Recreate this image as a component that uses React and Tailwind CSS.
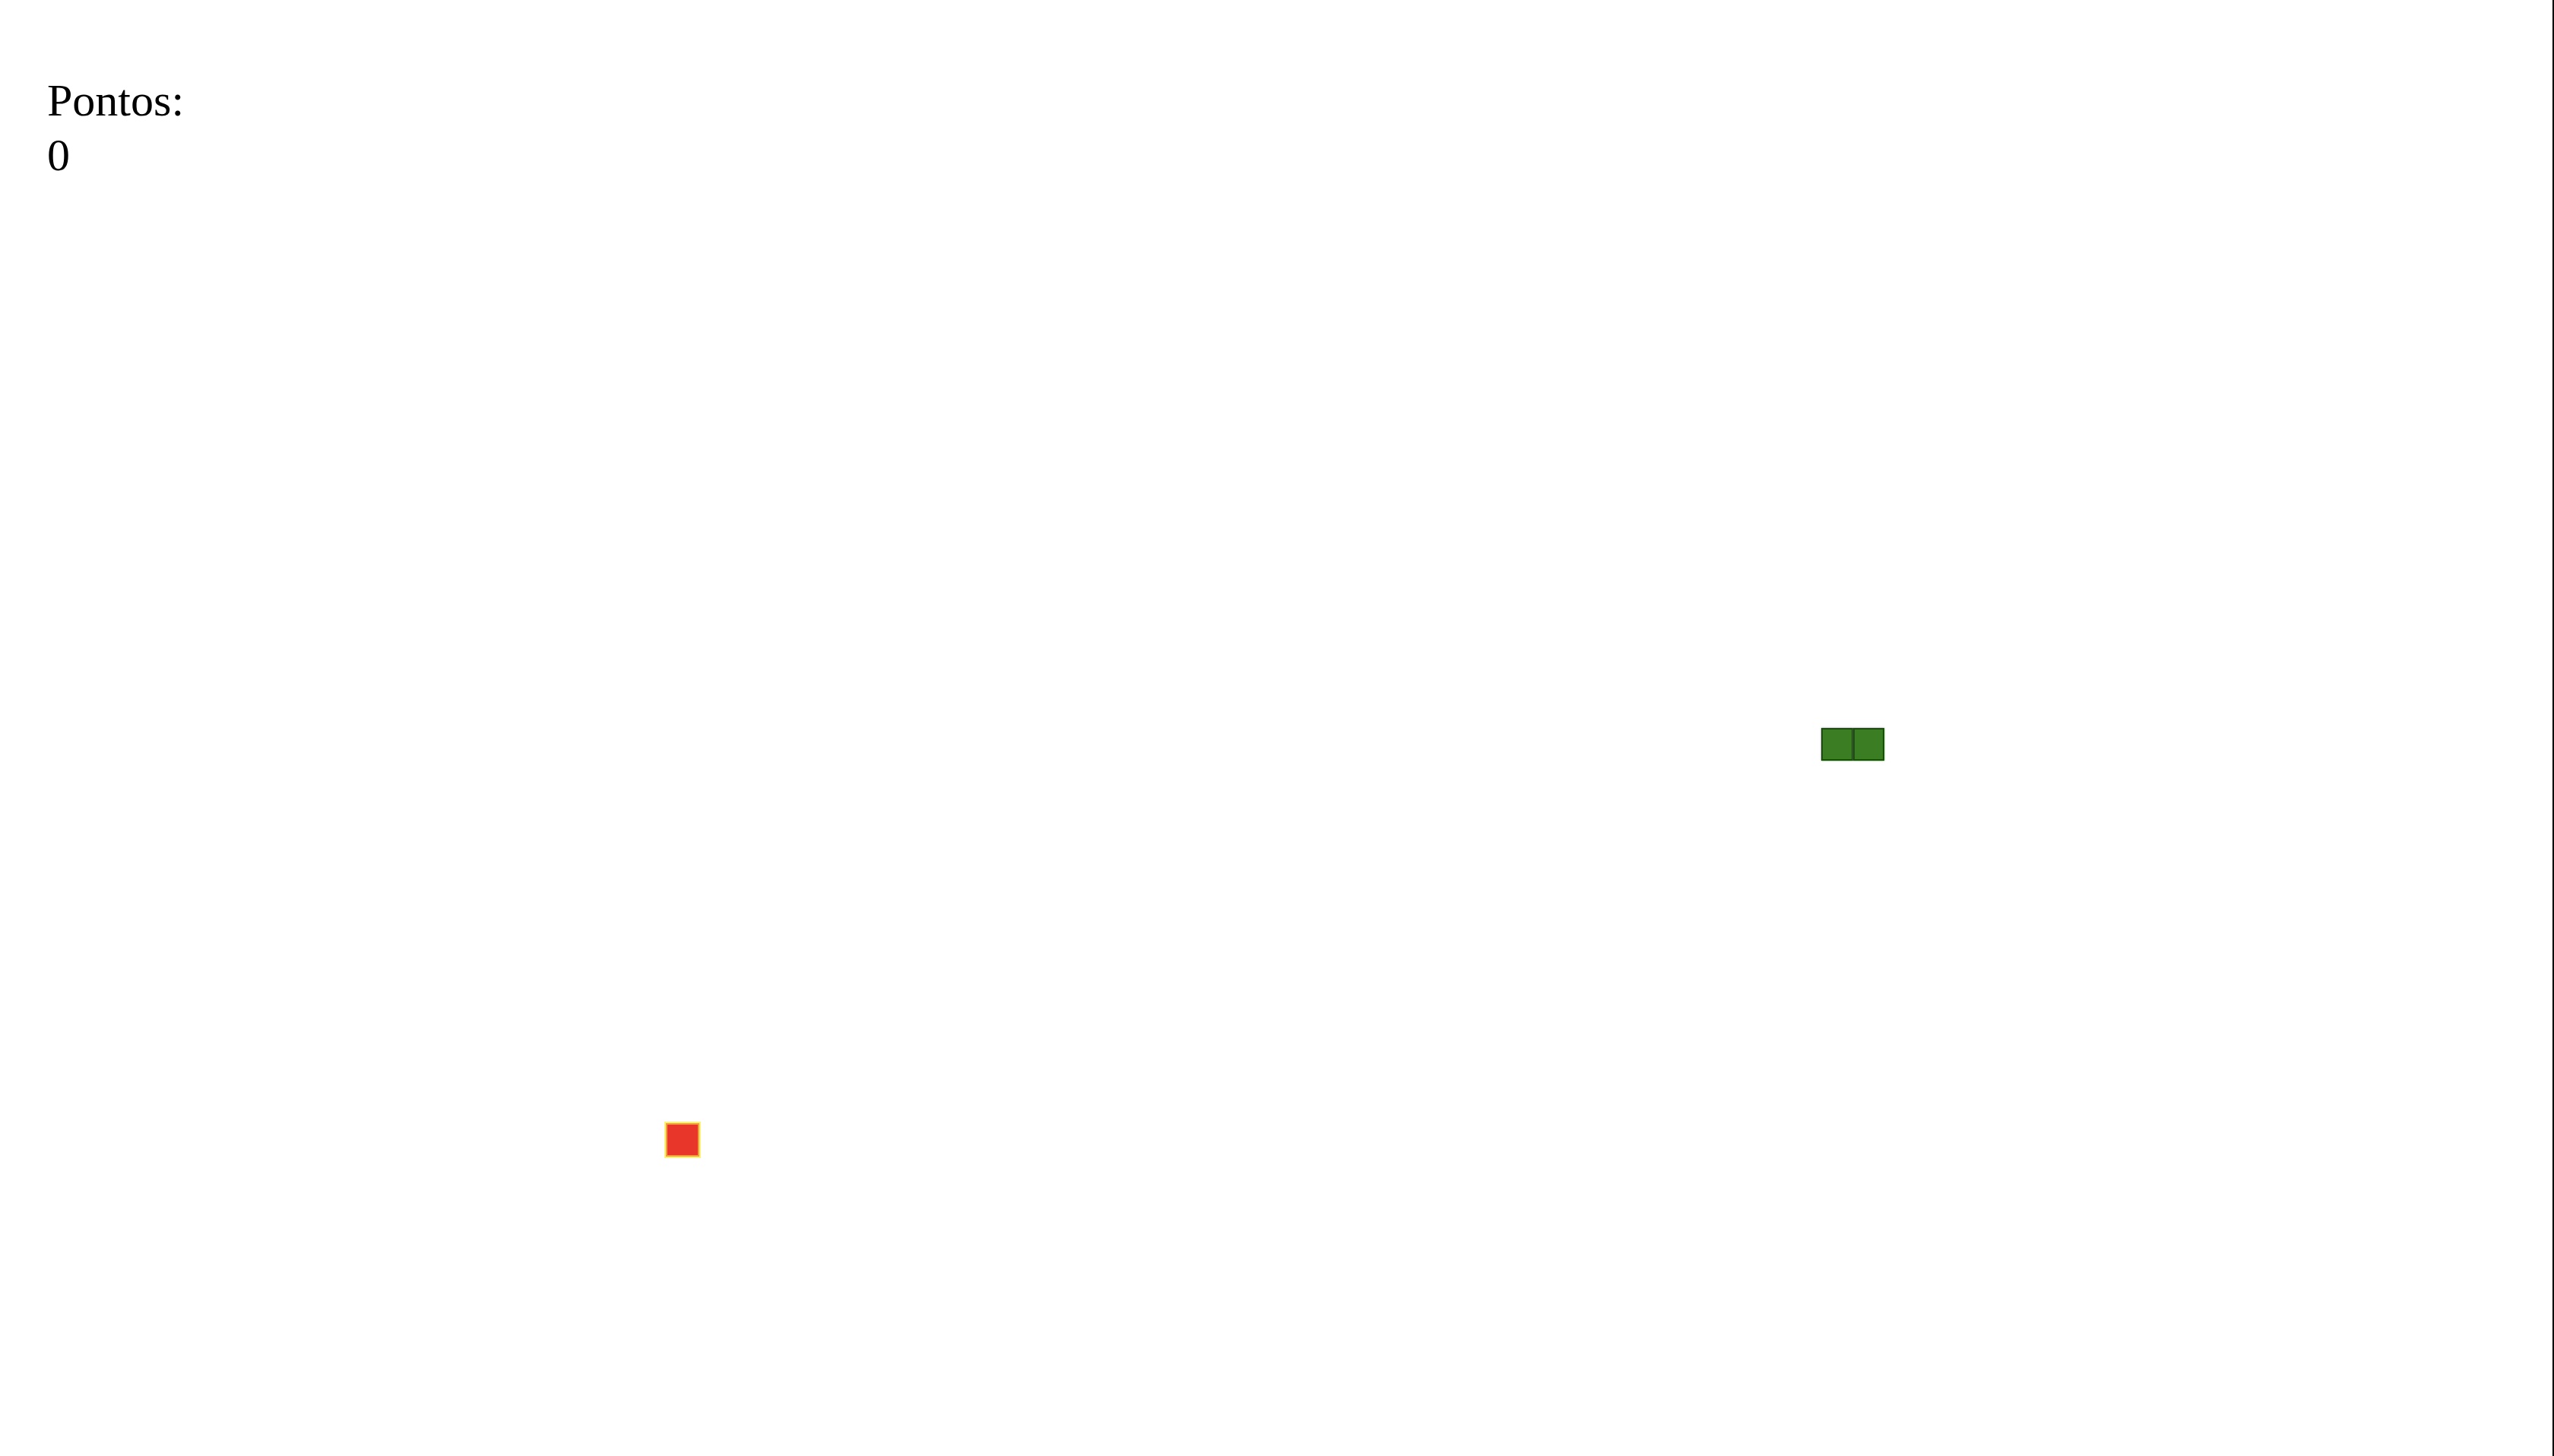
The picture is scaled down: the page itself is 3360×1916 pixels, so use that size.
export default function App() {
  return (
    <div className="relative w-[3360px] h-[1916px] bg-white border-r-2 border-black overflow-hidden" style={{ fontFamily: '"Liberation Serif", "Times New Roman", serif' }}>
      <div className="pt-[96px] pl-[62px] text-[60px] leading-[72px] text-black">
        <div>Pontos:</div>
        <div>0</div>
      </div>
      <div className="absolute left-[2396px] top-[958px] flex">
        <div className="w-[42px] h-[43px] bg-[#3b7d23] border-2 border-[#1f4a14] shadow-[0_0_2px_#777]" />
        <div className="w-[41px] h-[43px] bg-[#3b7d23] border-2 border-[#1f4a14] shadow-[0_0_2px_#777]" />
      </div>
      <div className="absolute left-[876px] top-[1478px] w-[44px] h-[44px] bg-[#e8372a] border-2 border-[#f0a03a] shadow-[0_0_0_2px_#fff27a]" />
    </div>
  );
}
